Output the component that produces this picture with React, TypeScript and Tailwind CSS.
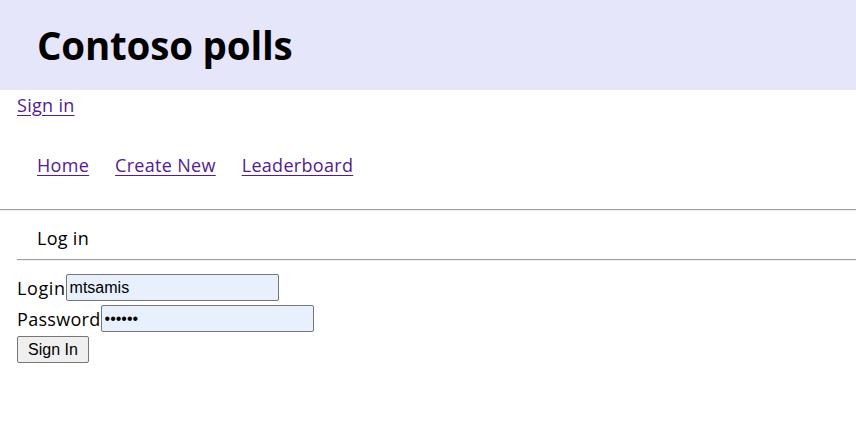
export default function App() {
  const linkCls = "text-[#551a8b] underline underline-offset-[3px]";
  const inputCls =
    "w-[213px] h-[27px] border border-[#767676] rounded-[2px] bg-[#e8f0fe] px-[3px] text-[16px] tracking-normal font-['Liberation_Sans',Arial,sans-serif] outline-none";

  return (
    <div className="min-h-screen bg-white text-black text-[18px] leading-[24px] tracking-[0.3px] font-['Open_Sans','Noto_Sans',sans-serif]">
      {/* HEADER */}
      <header className="bg-[#e6e6fa] h-[90px] flex items-center pl-[37px]">
        <h1 className="text-[38.5px] font-bold leading-none tracking-[-0.2px]">Contoso polls</h1>
      </header>

      <div className="pl-[17px] pt-[3px]">
        <a href="#" className={linkCls}>Sign in</a>
      </div>

      {/* NAV */}
      <nav className="flex gap-[26px] pl-[37px] pt-[36px] pb-[32px]">
        <a href="#" className={linkCls}>Home</a>
        <a href="#" className={linkCls}>Create New</a>
        <a href="#" className={linkCls}>Leaderboard</a>
      </nav>

      <hr className="border-t border-t-[#a0a0a0] border-b border-b-[#eeeeee]" />

      <div className="pl-[37px] pt-[15px] pb-[9px]">Log in</div>

      <div className="pl-[17px]">
        <hr className="border-t border-t-[#a0a0a0] border-b border-b-[#eeeeee]" />

        {/* LOGIN FORM */}
        <form className="pt-[13px] flex flex-col gap-[4px]" onSubmit={(e) => e.preventDefault()}>
          <div className="flex items-center h-[27px]">
            <label className="tracking-[0.6px]">Login</label>
            <input defaultValue="mtsamis" className={inputCls} />
          </div>
          <div className="flex items-center h-[27px]">
            <label>Password</label>
            <input type="password" defaultValue="secret" className={inputCls} />
          </div>
          <div className="flex h-[27px]">
            <button
              type="submit"
              className="h-[27px] px-[10px] border border-[#767676] rounded-[2px] bg-[#efefef] text-[16px] tracking-normal font-['Liberation_Sans',Arial,sans-serif]"
            >
              Sign In
            </button>
          </div>
        </form>
      </div>
    </div>
  );
}
